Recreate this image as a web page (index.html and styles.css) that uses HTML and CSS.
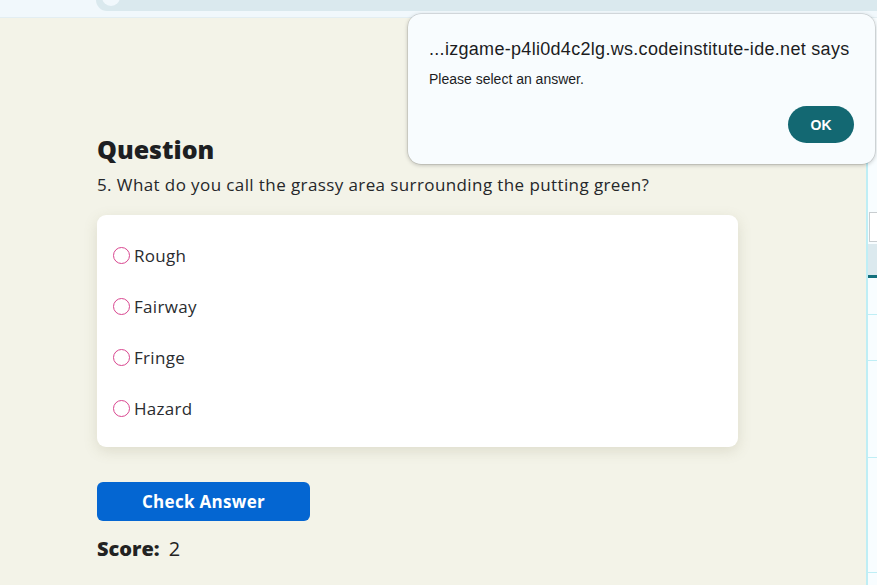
FILE: index.html
```html
<!DOCTYPE html>
<html lang="en">
<head>
<meta charset="utf-8">
<title>Golf Quiz</title>
<link rel="stylesheet" href="styles.css">
</head>
<body>
<div class="topbar">
  <div class="pill"><span class="knob"></span></div>
</div>
<div class="layout">
  <main class="quiz">
    <h2 class="heading">Question</h2>
    <p class="question">5. What do you call the grassy area surrounding the putting green?</p>
    <div class="card">
      <label class="option"><span class="radio"></span>Rough</label>
      <label class="option"><span class="radio"></span>Fairway</label>
      <label class="option"><span class="radio"></span>Fringe</label>
      <label class="option"><span class="radio"></span>Hazard</label>
    </div>
    <button class="check">Check Answer</button>
    <p class="score"><b>Score:</b> 2</p>
  </main>
  <aside class="side">
    <div class="side-input"></div>
    <div class="side-band"></div>
    <div class="side-row r1"></div>
    <div class="side-row r2"></div>
    <div class="side-row r3"></div>
    <div class="side-row r4"></div>
  </aside>
</div>
<div class="dialog">
  <div class="dialog-title">...izgame-p4li0d4c2lg.ws.codeinstitute-ide.net says</div>
  <div class="dialog-msg">Please select an answer.</div>
  <div class="dialog-actions"><button class="ok">OK</button></div>
</div>
</body>
</html>
```
FILE: styles.css
```css
* { box-sizing: border-box; }
html, body { margin: 0; padding: 0; }
body {
  width: 877px;
  height: 585px;
  overflow: hidden;
  background: #f3f3e8;
  font-family: "Open Sans", "Liberation Sans", sans-serif;
  color: #222;
  position: relative;
}
.topbar {
  height: 18px;
  background: #f1f8fc;
  border-bottom: 1px solid #e3eef2;
  padding-left: 96px;
}
.pill {
  height: 11px;
  background: #dae9ee;
  border-bottom-left-radius: 12px;
  position: relative;
  overflow: hidden;
}
.knob {
  position: absolute;
  left: 6px;
  top: -12px;
  width: 18px;
  height: 18px;
  border-radius: 50%;
  background: #f1f8fc;
}
.layout {
  display: flex;
  height: 567px;
}
.quiz {
  flex: 1;
  padding: 115px 0 0 97px;
}
.heading {
  margin: 0;
  font-size: 25px;
  font-weight: 800;
  line-height: 32px;
  color: #1d1f22;
}
.question {
  margin: 8px 0 0;
  font-size: 17px;
  letter-spacing: 0.4px;
  line-height: 24px;
  color: #25272a;
}
.card {
  margin-top: 18px;
  width: 641px;
  height: 232px;
  background: #fff;
  border-radius: 9px;
  box-shadow: 0 4px 14px rgba(120, 115, 80, 0.18);
  padding: 29px 16px 0;
  display: flex;
  flex-direction: column;
  gap: 29px;
}
.option {
  display: flex;
  align-items: center;
  gap: 4px;
  height: 22px;
  font-size: 17px;
  letter-spacing: 0.3px;
  color: #2a2c30;
}
.radio {
  width: 17px;
  height: 17px;
  border: 1.6px solid #d9468f;
  border-radius: 50%;
  flex: none;
}
.check {
  display: block;
  margin-top: 35px;
  width: 213px;
  height: 39px;
  border: none;
  border-radius: 6px;
  background: #0466d2;
  color: #fff;
  font-family: inherit;
  font-size: 17px;
  font-weight: 700;
  letter-spacing: 0.3px;
}
.score {
  margin: 14px 0 0;
  font-size: 20px;
  line-height: 28px;
  color: #222;
}
.score b { font-weight: 800; margin-right: 4px; }
.side {
  width: 11px;
  border-left: 2px solid #bfeef5;
  background: #f8fdff;
  padding-top: 194px;
  display: flex;
  flex-direction: column;
}
.side-input {
  height: 30px;
  border: 1px solid #c8cdd0;
  border-right: none;
  background: #fff;
  margin-left: 1px;
}
.side-band {
  height: 34px;
  background: #dbe9ee;
  border-bottom: 3px solid #13707c;
  margin-top: 2px;
}
.side-row { border-bottom: 1.5px solid #bfeef5; }
.r1 { height: 37px; }
.r2 { height: 46px; }
.r3 { height: 97px; }
.r4 { height: 115px; }
.dialog {
  position: absolute;
  left: 408px;
  top: 14px;
  width: 467px;
  height: 150px;
  background: #f8fcfe;
  border-radius: 13px;
  box-shadow: 0 1px 4px rgba(0,0,0,0.25), 0 0 0 0.5px rgba(0,0,0,0.15);
  padding: 25px 21px 0;
  font-family: "Liberation Sans", Arial, sans-serif;
}
.dialog-title {
  font-size: 18px;
  letter-spacing: 0.3px;
  line-height: 20px;
  color: #1c1c1e;
}
.dialog-msg {
  margin-top: 12px;
  font-size: 14px;
  line-height: 16px;
  color: #1c1c1e;
}
.dialog-actions {
  display: flex;
  justify-content: flex-end;
  margin-top: 19px;
}
.ok {
  width: 66px;
  height: 37px;
  border: none;
  border-radius: 19px;
  background: #136872;
  color: #fff;
  font-family: inherit;
  font-weight: 700;
  font-size: 14px;
}
```
